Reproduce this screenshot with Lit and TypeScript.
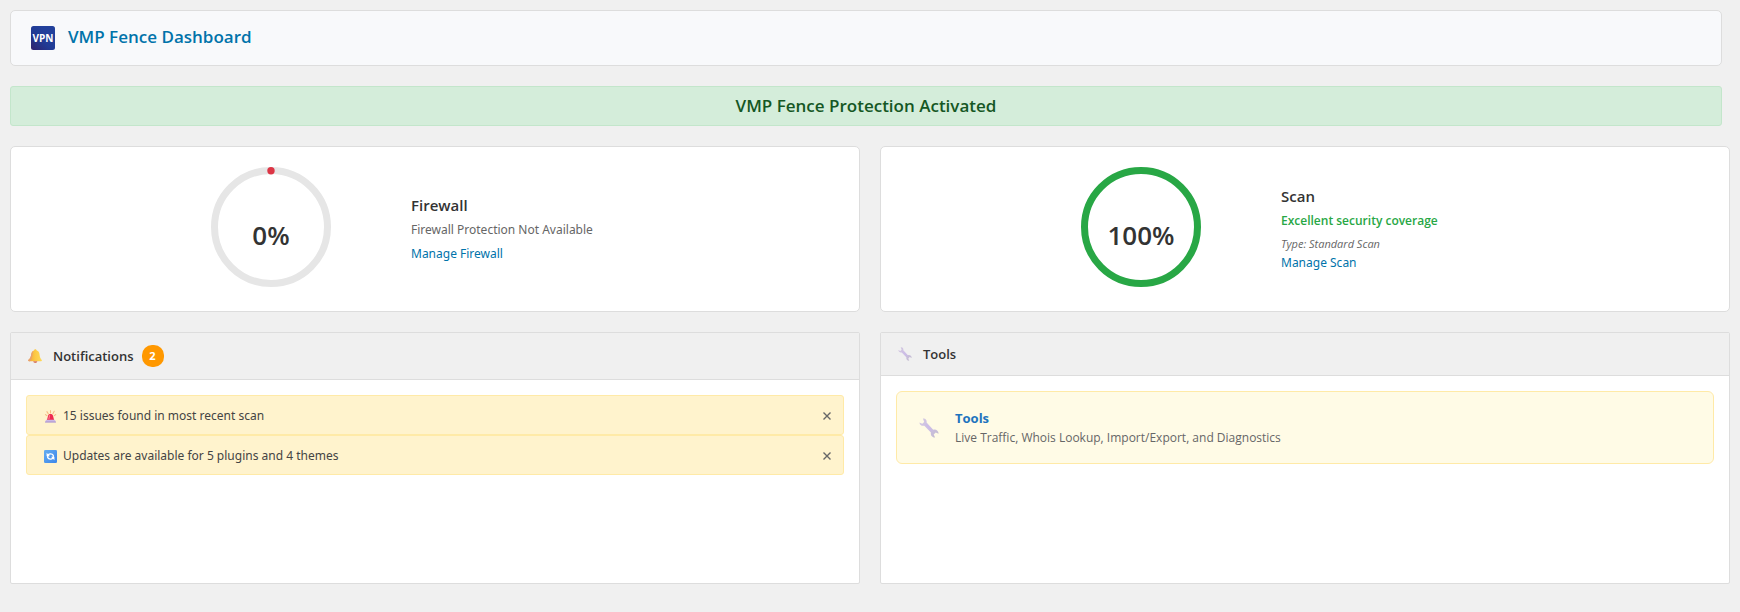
import { LitElement, html, svg, css, nothing } from "lit";
import { customElement, property, state } from "lit/decorators.js";

const sirenIcon = html`<svg viewBox="0 0 16 16" aria-hidden="true">
  <path d="M3.600 2l1.800 3M8 0.800v3M12.600 1.600l-1.800 3.200M1.800 5.600l1.800 1.400M14.400 5.600l-1.800 1.400" stroke="#f4bb84" stroke-width="1.300" stroke-linecap="round" fill="none"/>
  <path d="M3.600 12.500 5 7.200C5.400 5.600 6.500 5 8 5s2.700.6 3.100 2.200L12.500 12.500z" fill="#ef2950"/>
  <path d="M6 7.500c.3-1 .9-1.300 1.600-1.300L6.700 11.500H5.200z" fill="#ff7d8e"/>
  <path d="M2.600 12h10.800l1.300 3.200H1.300z" fill="#cdb8e6"/>
  <path d="M1.600 14.300h12.800l.4 1.200H1.200z" fill="#a892cb"/>
</svg>`;

const refreshIcon = html`<svg viewBox="0 0 16 16" aria-hidden="true">
  <defs><linearGradient id="sync" x1="0" y1="0" x2="1" y2="1"><stop offset="0" stop-color="#64adf0"/><stop offset="1" stop-color="#3c86ea"/></linearGradient></defs>
  <rect x="0" y="0" width="16" height="16" rx="1.500" fill="url(#sync)"/>
  <path d="M5 6C6.600 4.200 10 4.200 11.400 6.600v2.600M11 10C9.400 11.800 6 11.800 4.600 9.400V7" fill="none" stroke="#fff" stroke-width="1.600"/>
  <path d="M3.200 3.400v4.200h4.200zM12.800 12.600V8.400H8.600z" fill="#fff"/>
</svg>`;

const bellIcon = html`<svg viewBox="0 0 16 16" aria-hidden="true">
  <defs><linearGradient id="bell" x1="0" y1="0" x2="1" y2="0"><stop offset="0" stop-color="#f2a23a"/><stop offset="0.500" stop-color="#fcc945"/><stop offset="1" stop-color="#ffd95a"/></linearGradient></defs>
  <path d="M8.400 0.200c.8 0 1.300.5 1.300 1.300 2.200.7 3.300 2.500 3.500 4.700.2 2.700.8 4.300 2.500 6.300.5.900.1 1.500-.8 1.500H1.300c-1 0-1.300-.8-.7-1.600 1.900-2 2.700-3.600 3.100-6.200.3-2.200 1.300-4 3.400-4.700 0-.8.500-1.300 1.300-1.300z" fill="url(#bell)"/>
  <path d="M0.600 12.400c1.900-2 2.700-3.600 3.100-6.200.2-1.600.8-3 2-3.900C5.400 6 5 10 2.400 14H1.300c-1 0-1.300-.8-.7-1.600z" fill="#e8a070"/>
  <path d="M6 14h4.600c-.1 1.200-1 2-2.300 2S6.100 15.200 6 14z" fill="#d9745a"/>
</svg>`;

const wrenchIcon = html`<svg viewBox="0 0 20 20" aria-hidden="true">
  <defs><linearGradient id="steel" x1="0" y1="0" x2="1" y2="1"><stop offset="0" stop-color="#d3c9de"/><stop offset="0.500" stop-color="#cdbfe6"/><stop offset="1" stop-color="#c2bccb"/></linearGradient></defs>
  <path d="M3.900 0.600c2.400-.5 4.300 1.500 3.700 4l6.600 7.100c2.700-.8 5.400 1 5.400 4l-2.900-1.300-2 2.100 1.400 3c-2.900.2-4.800-2.400-4.200-5L5.300 7.700C3 8.400.7 6.900.4 4.400l2.900 1.300 1.900-1.700z" fill="url(#steel)"/>
  <path d="M6.900 6.300l6 6.400" stroke="#cbb9ea" stroke-width="1"/>
</svg>`;

const logo = html`<svg class="logo" viewBox="0 0 24 24" role="img" aria-label="VPN">
  <defs><linearGradient id="logo" x1="0" y1="1" x2="0.700" y2="0.300"><stop offset="0" stop-color="#30206b"/><stop offset="0.600" stop-color="#213a94"/><stop offset="1" stop-color="#22409b"/></linearGradient></defs>
  <rect width="24" height="24" rx="2.500" fill="url(#logo)"/>
  <text x="12" y="15.500" text-anchor="middle" font-size="10" font-weight="700" fill="#fff">VPN</text>
</svg>`;

@customElement("score-card")
class ScoreCard extends LitElement {
  @property() heading = "";
  @property({ type: Number }) value = 0;
  @property() status = "";
  @property() detail = "";
  @property() action = "";

  static styles = css`
    :host {
      display: flex;
      justify-content: center;
      align-items: center;
      gap: 80px;
      padding: 20px;
      background: #fff;
      border: 1px solid #ddd;
      border-radius: 5px;
    }
    .gauge { display: grid; padding-bottom: 4px; }
    .gauge > * { grid-area: 1 / 1; }
    .ring { width: 120px; height: 120px; fill: none; stroke-width: 7; }
    .track { stroke: #e6e6e6; }
    .good { stroke: #28a745; }
    .bad { fill: #dc3545; }
    .value {
      place-self: center;
      padding-top: 16px;
      font-size: 26px;
      line-height: 40px;
      font-weight: 600;
      color: #333;
    }
    .info { width: 248px; line-height: 24px; }
    h2 { margin: 0; font-size: 15px; line-height: 25px; font-weight: 600; color: #333; }
    p { margin: 0; color: #666; }
    .status, a { font-family: "Segoe UI", "Noto Sans", "Open Sans", sans-serif; }
    .ok { color: #28a745; font-family: inherit; font-weight: 600; }
    .detail { font-size: 11px; line-height: 22px; font-style: italic; }
    .detail + a { display: block; line-height: 16px; margin-bottom: 4px; }
    a { color: #0073aa; text-decoration: none; }
  `;

  render() {
    const good = this.value > 0;
    return html`
      <div class="gauge">
        <svg class="ring" viewBox="0 0 120 120" aria-hidden="true">
          <circle class=${good ? "good" : "track"} cx="60" cy="60" r="56.500"></circle>
          ${good ? nothing : svg`<circle class="bad" cx="60" cy="3.700" r="3.700"></circle>`}
        </svg>
        <span class="value">${this.value}%</span>
      </div>
      <div class="info">
        <h2>${this.heading}</h2>
        <p class=${good ? "ok" : "status"}>${this.status}</p>
        ${this.detail ? html`<p class="detail">${this.detail}</p>` : nothing}
        <a href="#">${this.action}</a>
      </div>
    `;
  }
}

@customElement("app-root")
class AppRoot extends LitElement {
  @state() private notices = [
    { icon: sirenIcon, text: "15 issues found in most recent scan" },
    { icon: refreshIcon, text: "Updates are available for 5 plugins and 4 themes" },
  ];

  static styles = css`
    :host {
      display: block;
      box-sizing: border-box;
      min-height: 100vh;
      padding: 10px;
      background: #f0f0f0;
      color: #333;
      font-family: "Segoe UI", "Open Sans", "Noto Sans", sans-serif;
      font-size: 12px;
    }
    h1, h2, h3, p, ul { margin: 0; padding: 0; }
    a { text-decoration: none; }
    .top {
      display: flex;
      align-items: flex-start;
      gap: 13px;
      margin: 0 8px 20px 0;
      padding: 12px 20px 14px;
      background: #f8f9fb;
      border: 1px solid #ddd;
      border-radius: 5px;
    }
    .logo { width: 24px; height: 24px; margin: 3px 0 1px; }
    h1 { font-size: 17px; line-height: 28px; font-weight: 600; color: #0073aa; }
    .banner {
      margin: 0 8px 20px 0;
      padding: 5px 20px;
      text-align: center;
      font-size: 17px;
      line-height: 28px;
      font-weight: 600;
      color: #155724;
      background: #d4edda;
      border: 1px solid #c3e6cb;
      border-radius: 3px;
    }
    .grid { display: grid; grid-template-columns: 1fr 1fr; gap: 20px; }
    .panel {
      min-height: 250px;
      background: #fff;
      border: 1px solid #ddd;
      border-radius: 2px;
    }
    .panel-head {
      display: flex;
      align-items: center;
      padding: 12px 17px;
      background: #f0f0f0;
      border-bottom: 1px solid #ddd;
    }
    .panel-head svg { width: 14px; height: 14px; margin-right: 11px; }
    .panel-head h2 { font-size: 13px; line-height: 18px; font-weight: 600; }
    .badge {
      margin-left: 8px;
      width: 22px;
      border-radius: 10px;
      background: #ff9800;
      color: #fff;
      font-size: 11px;
      line-height: 22px;
      font-weight: 700;
      text-align: center;
    }
    .panel-body { padding: 15px; }
    ul { list-style: none; }
    .notice {
      display: flex;
      align-items: center;
      padding: 11px 10px 9px 17px;
      line-height: 18px;
      color: #444;
      background: #fff3cd;
      border: 1px solid #ffeaa7;
      border-radius: 3px;
      font-family: "Segoe UI", "Noto Sans", "Open Sans", sans-serif;
    }
    .notice svg { width: 13px; height: 13px; margin-right: 6px; }
    .notice p { flex: 1; }
    .close {
      width: 12px;
      height: 18px;
      padding: 0;
      border: 0;
      background: none;
      color: #666;
      cursor: pointer;
    }
    .close svg { display: block; width: 12px; height: 12px; margin: 0; fill: none; stroke: currentColor; stroke-width: 1.4; }
    .tool {
      display: flex;
      align-items: center;
      gap: 16px;
      padding: 16px 22px 15px;
      background: #fffbe6;
      border: 1px solid #ffeaa7;
      border-radius: 6px;
    }
    .tool svg { width: 20px; height: 20px; }
    .tool h3 { font-size: 13px; line-height: 20px; font-weight: 700; }
    .tool a { color: #1e73be; }
    .tool p { line-height: 20px; color: #666; }
  `;

  private dismiss(index: number) {
    this.notices = this.notices.filter((_, i) => i !== index);
  }

  render() {
    return html`
      <header class="top">${logo}<h1>VMP Fence Dashboard</h1></header>
      <div class="banner" role="status">VMP Fence Protection Activated</div>
      <main class="grid">
        <score-card heading="Firewall" .value=${0} status="Firewall Protection Not Available" action="Manage Firewall"></score-card>
        <score-card heading="Scan" .value=${100} status="Excellent security coverage" detail="Type: Standard Scan" action="Manage Scan"></score-card>
        <section class="panel">
          <div class="panel-head">
            ${bellIcon}
            <h2>Notifications</h2>
            <span class="badge">${this.notices.length}</span>
          </div>
          <ul class="panel-body">
            ${this.notices.map(
              (n, i) => html`<li class="notice">
                ${n.icon}
                <p>${n.text}</p>
                <button class="close" aria-label="Dismiss" @click=${() => this.dismiss(i)}>
                  <svg viewBox="0 0 12 12" aria-hidden="true"><path d="M2.500 2.500l7 7M9.500 2.500l-7 7"/></svg>
                </button>
              </li>`
            )}
          </ul>
        </section>
        <section class="panel">
          <div class="panel-head">${wrenchIcon}<h2>Tools</h2></div>
          <div class="panel-body">
            <div class="tool">
              ${wrenchIcon}
              <div>
                <h3><a href="#">Tools</a></h3>
                <p>Live Traffic, Whois Lookup, Import/Export, and Diagnostics</p>
              </div>
            </div>
          </div>
        </section>
      </main>
    `;
  }
}
